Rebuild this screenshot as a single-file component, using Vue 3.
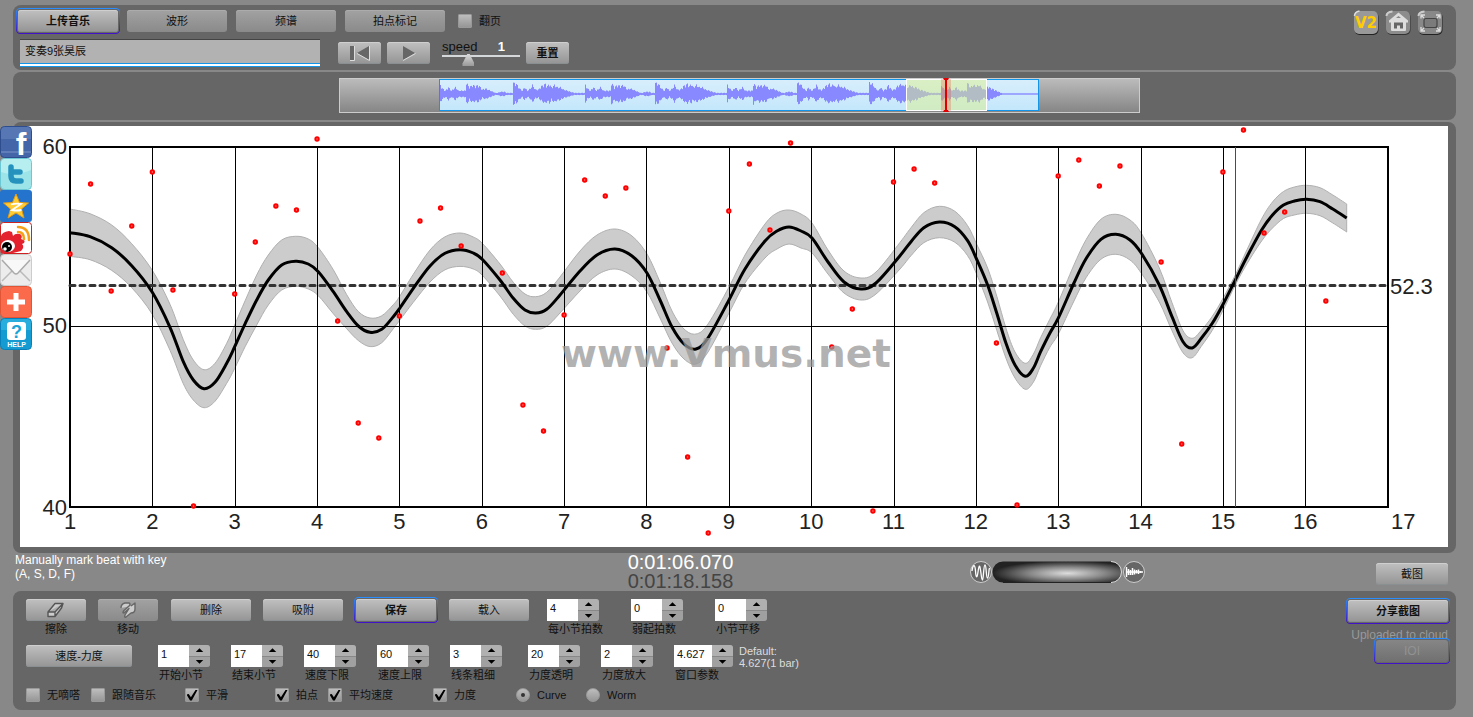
<script setup>
import { ref, reactive, computed } from 'vue'

const title = ref('变奏9张昊辰')
const flip = ref(false)
const speed = ref(1)
const mode = ref('curve')

const barFields = reactive([
  { id: 'beats', label: '每小节拍数', value: '4' },
  { id: 'pickup', label: '弱起拍数', value: '0' },
  { id: 'shift', label: '小节平移', value: '0' },
])
const rangeFields = reactive([
  { id: 'first', label: '开始小节', value: '1' },
  { id: 'last', label: '结束小节', value: '17' },
  { id: 'low', label: '速度下限', value: '40' },
  { id: 'high', label: '速度上限', value: '60' },
  { id: 'stroke', label: '线条粗细', value: '3' },
])
const dynamicsFields = reactive([
  { id: 'alpha', label: '力度透明', value: '20' },
  { id: 'zoom', label: '力度放大', value: '2' },
  { id: 'window', label: '窗口参数', value: '4.627', wide: true },
])
const checks = reactive([
  { id: 'mute', label: '无嘀嗒', on: false },
  { id: 'follow', label: '跟随音乐', on: false },
  { id: 'smooth', label: '平滑', on: true },
  { id: 'points', label: '拍点', on: true },
  { id: 'mean', label: '平均速度', on: true },
  { id: 'force', label: '力度', on: true },
])
function step(field, by) {
  field.value = String(Number(field.value) + by)
}

/* ---- tempo chart ---- */
const barX = (bar) => 50 + (bar - 1) * 82.35
const bars = Array.from({ length: 16 }, (_, i) => i + 1)
const innerBars = bars.slice(1)
const beats = [
  [1, 128], [1.25, 58], [1.5, 165], [1.75, 100], [2, 46], [2.25, 164], [2.5, 380],
  [3, 168], [3.25, 116], [3.5, 80], [3.75, 84], [4, 13], [4.25, 195], [4.5, 297],
  [4.75, 312], [5, 190], [5.25, 95], [5.5, 82], [5.75, 120], [6.25, 147], [6.5, 279],
  [6.75, 305], [7, 189], [7.25, 54], [7.5, 70], [7.75, 62], [8.25, 222], [8.5, 331],
  [8.75, 407], [9, 85], [9.25, 38], [9.5, 104], [9.75, 17], [10.25, 221], [10.5, 183],
  [10.75, 385], [11, 56], [11.25, 43], [11.5, 57], [12.25, 217], [12.5, 379], [13, 50],
  [13.25, 34], [13.5, 60], [13.75, 40], [14.25, 136], [14.5, 318], [15, 46],
  [15.25, 4], [15.5, 107], [15.75, 86], [16.25, 175],
]
// x, y and half width of the dynamics band
const tempo = [
  [50, 106.7, 23.7], [70, 110.7, 23], [91.7, 121.7, 22.7], [111.7, 139.7, 22], [132.3, 166.3, 22],
  [150, 201.3, 23], [163.3, 235.7, 22], [173.3, 254, 20], [184, 262.7, 19], [195, 256.3, 19],
  [206.7, 237.3, 20], [214.7, 220.7, 21.7], [225.3, 197.3, 23], [236.7, 174, 25], [248.3, 154, 25],
  [261.7, 139, 25], [275.7, 135.3, 25], [288.3, 138, 25], [298.3, 145.7, 24], [313.3, 165.7, 22],
  [326.7, 185.7, 17], [338.3, 200, 14.5], [350, 206.3, 14.3], [361.7, 203.3, 13.5], [373.3, 190.7, 12],
  [379.7, 182.3, 12], [393.3, 162.3, 14], [410, 140, 16], [425, 127.3, 16.5], [440, 123.7, 16.7],
  [453.3, 127, 16], [462.7, 133.7, 16], [480, 154, 16], [493.3, 172.3, 16], [505, 184, 16],
  [515.7, 187, 16.3], [526.7, 183.3, 17], [540, 169, 18], [560, 145, 20], [577, 129, 20],
  [595, 123, 20], [612, 130, 20], [627, 147, 19], [640, 174, 18], [652, 201, 16], [664, 218, 15],
  [676, 223, 15], [688, 212, 14], [709, 174, 13], [725, 143, 14], [745, 115, 17], [757, 105, 18],
  [769, 101, 17], [781, 105, 17], [792, 112, 15], [808, 136, 12], [824, 156, 11], [841, 163, 11],
  [856, 157, 11], [880, 129.7, 13.3], [891, 115.7, 14], [903.8, 101.7, 15], [919.4, 96, 15.7],
  [934.8, 100.7, 15.5], [947.6, 114.7, 15], [956.7, 133.3, 15], [967.6, 159, 17], [976.8, 187.3, 17],
  [986, 217.3, 15], [995, 239, 13], [1005.2, 250.3, 13], [1013.3, 242.3, 14], [1020.6, 225.7, 14],
  [1029.8, 207.3, 14], [1038.5, 191.7, 16], [1053.5, 158, 18], [1066.3, 132.3, 19], [1080.9, 113.3, 20],
  [1095.8, 108.3, 20], [1110, 114, 20], [1121.4, 127.3, 20], [1139.3, 159, 17], [1152, 190.7, 14],
  [1163, 215.7, 11], [1172.2, 222, 9.7], [1181.3, 212.3, 8], [1192.3, 197.3, 7], [1203.2, 178, 6],
  [1215.3, 154, 5], [1227, 130.7, 7], [1241.6, 104, 11], [1252.5, 89, 13], [1263.5, 79, 13.5],
  [1274.4, 75, 14], [1286.5, 73.3, 14], [1300, 75.7, 14], [1312.8, 83, 14], [1326.7, 92, 14],
]
// Catmull-Rom spline through the points, as cubic Bézier segments
function spline(pts) {
  let d = ''
  for (let i = 0; i < pts.length - 1; i++) {
    const a = pts[i - 1] || pts[i]
    const b = pts[i]
    const c = pts[i + 1]
    const e = pts[i + 2] || c
    const n = [
      b[0] + (c[0] - a[0]) / 6, b[1] + (c[1] - a[1]) / 6,
      c[0] - (e[0] - b[0]) / 6, c[1] - (e[1] - b[1]) / 6, c[0], c[1],
    ].map((v) => v.toFixed(1))
    d += `C${n.join(' ')}`
  }
  return d
}
const curve = computed(() => `M${tempo[0][0]} ${tempo[0][1]}${spline(tempo)}`)
const band = computed(() => {
  const top = tempo.map(([x, y, h]) => [x, y - h])
  const bottom = tempo.map(([x, y, h]) => [x, y + h]).reverse()
  return `M${top[0].join(' ')}${spline(top)}L${bottom[0].join(' ')}${spline(bottom)}Z`
})

/* ---- audio overview ---- */
const phraseA = [[0, 10], [3, 9], [6, 5], [9, 3], [11, 6], [14, 3], [17, 5], [19, 8], [22, 4], [25, 4], [28, 7], [32, 9], [34, 7], [36, 9], [38, 6], [41, 8], [44, 6], [47, 6], [50, 4], [54, 3], [57, 2], [61, 1], [90, 1]]
const phraseB = [[0, 8], [2, 5], [5, 3], [8, 6], [11, 3], [15, 6], [18, 3], [25, 3], [26, 10], [29, 6], [32, 8], [35, 7], [38, 8], [42, 4], [45, 5], [50, 3], [55, 1], [57, 1], [60, 2], [64, 2], [66, 1], [90, 1]]
const phrases = [[101, phraseB], [174, phraseA], [246, phraseB], [316, phraseA], [388, phraseB], [458, phraseA], [530, phraseA], [602, phraseB]]
function loudness(x) {
  if (x > 662) return 0.5
  if (x > 646) return Math.max(1, (664 - x) / 2.4)
  const [start, shape] = phrases.filter((p) => p[0] <= x).pop()
  const at = x - start
  const k = shape.findIndex((p) => p[0] > at)
  const a = shape[k - 1]
  const b = shape[k]
  return a[1] + ((b[1] - a[1]) * (at - a[0])) / (b[0] - a[0])
}
const wave = computed(() => {
  let d = ''
  for (let x = 101; x < 699; x++) {
    const v = loudness(x)
    const up = Math.max(0.7, v * (0.8 + 0.4 * Math.abs(Math.sin(x * 7.3))))
    const down = Math.max(0.7, v * (0.75 + 0.35 * Math.abs(Math.sin(x * 4.1 + 1))))
    d += `M${x + 0.5} ${(16 - up).toFixed(1)}V${(16 + down).toFixed(1)}`
  }
  return d
})
</script>

<template>
  <div class="app">
    <header class="panel top">
      <div class="tools">
        <div class="row">
          <button class="btn w100 accent">上传音乐</button>
          <button class="btn w100 dim">波形</button>
          <button class="btn w100 dim">频谱</button>
          <button class="btn w100 dim">拍点标记</button>
          <label class="check flip"><input v-model="flip" type="checkbox" />翻页</label>
        </div>
        <div class="row transport">
          <input v-model="title" class="title" type="text" aria-label="Title" />
          <button class="btn w43" aria-label="Rewind">
            <svg width="22" height="16" viewBox="0 0 22 16">
              <path d="M1 1h4v14H1z" fill="#666" /><path d="M5.500 1v14.500H1" fill="none" stroke="#ddd" />
              <path d="M20 1v14L8 8z" fill="#666" /><path d="M20.500 1v14.500L8 8.500" fill="none" stroke="#ddd" />
            </svg>
          </button>
          <button class="btn w43" aria-label="Play">
            <svg width="16" height="16" viewBox="0 0 16 16">
              <path d="M2 1v14l12-7z" fill="#666" /><path d="M2 15.500l12.500-7" fill="none" stroke="#ddd" />
            </svg>
          </button>
          <div class="speed">
            <div class="speed-text"><label for="speed">speed</label><output for="speed">{{ speed }}</output></div>
            <input id="speed" v-model="speed" type="range" min="0.1" max="3" step="0.1" />
          </div>
          <button class="btn w43 strong">重置</button>
        </div>
      </div>
      <nav class="corner">
        <a href="#v2" aria-label="Version 2">
          <svg width="26" height="26" viewBox="0 0 26 26">
            <rect x="1.500" y="2" width="24" height="23" rx="5" fill="#222" /><rect x="1" y="1" width="24" height="23" rx="5" fill="#999" />
            <path d="M1.500 6q0-4 5-5" fill="none" stroke="#ddd" stroke-width="1.500" />
            <text x="13" y="18" class="v2">V2</text>
          </svg>
        </a>
        <a href="#home" aria-label="Home">
          <svg width="26" height="26" viewBox="0 0 26 26">
            <rect x="1.500" y="2" width="24" height="23" rx="5" fill="#333" /><rect x="1" y="1" width="24" height="23" rx="5" fill="#8c8c8c" />
            <path d="M1.500 6q0-4 6-4.500" fill="none" stroke="#ccc" stroke-width="2" />
            <path d="M13.500 2.500L4 10.500v2h2V20q0 1 1 1h13q1 0 1-1v-7.500h2v-2z" fill="#ddd" />
            <path d="M9 18.500v-6h9v6h-3v-3h-3v3z" fill="#666" /><path d="M11 8h5l-2.500-2z" fill="#888" />
          </svg>
        </a>
        <a href="#full" aria-label="Full screen">
          <svg width="26" height="26" viewBox="0 0 26 26">
            <rect x="1.500" y="2" width="24" height="23" rx="5" fill="#222" /><rect x="1" y="1" width="24" height="23" rx="5" fill="#888" />
            <path d="M1.500 6q0-4 6-4.500" fill="none" stroke="#ccc" stroke-width="2" />
            <rect x="7" y="8.500" width="13" height="9" rx="2" fill="#7b7b7b" stroke="#444" stroke-width="1.200" />
            <path d="M4 8.500V5h4M4 5l3 3M19 5h4v3.500M23 5l-3 3M4 17v4h4M4 21l3-3M19 21h4v-4M23 21l-3-3" fill="none" stroke="#ddd" stroke-width="1.300" />
          </svg>
        </a>
      </nav>
    </header>

    <section class="panel overview">
      <svg width="802" height="35" viewBox="0 0 802 35" role="img" aria-label="Audio overview">
        <defs>
          <linearGradient id="ends" x2="0" y2="1"><stop stop-color="#bcbcbc" /><stop offset="1" stop-color="#858585" /></linearGradient>
          <linearGradient id="sky" x2="0" y2="1"><stop stop-color="#d8eefc" /><stop offset="1" stop-color="#c4e7fb" /></linearGradient>
        </defs>
        <rect x="0.500" y="0.500" width="800" height="34" fill="url(#ends)" stroke="#ccc" />
        <rect x="100.500" y="1.500" width="599" height="31" fill="url(#sky)" stroke="#1395ea" />
        <path :d="wave" stroke="#8888ff" />
        <rect x="567.500" y="1.500" width="80" height="31" fill="#dcf08c" fill-opacity="0.500" stroke="#fff" />
        <rect x="602" y="1" width="10" height="32" fill="#f00" opacity="0.180" />
        <path d="M607 1v32" stroke="#e00000" stroke-width="2" />
        <path d="M604 0h6l-1 2h-4zM604 34h6l-1-2h-4z" fill="#e00000" />
      </svg>
    </section>

    <main class="panel stage">
      <svg class="chart" viewBox="0 0 1428 421" role="img" aria-label="Tempo curve">
        <rect width="1428" height="421" fill="#fff" />
        <path :d="band" fill="#ccc" stroke="#b0b0b0" stroke-width="1" />
        <path v-for="bar in innerBars" :key="bar" :d="`M${Math.round(barX(bar)) + 0.5} 20V381`" stroke="#000" />
        <path d="M50 200.500H1368" stroke="#000" />
        <rect x="50" y="21" width="1318" height="360" fill="none" stroke="#000" stroke-width="2" />
        <path d="M50 159.500H1367" stroke="#333" stroke-width="3" stroke-dasharray="5 5" stroke-linecap="round" />
        <path :d="curve" fill="none" stroke="#000" stroke-width="3" />
        <circle v-for="[bar, y] in beats" :key="bar" :cx="barX(bar)" :cy="y" r="1.700" fill="#f88" stroke="#f00" stroke-width="2" />
        <path d="M1215.500 21V381" stroke="#f00" stroke-width="1" />
        <text x="706" y="241" class="mark">www.Vmus.net</text>
        <g class="axis">
          <text x="47" y="28" class="end">60</text>
          <text x="47" y="207" class="end">50</text>
          <text x="47" y="389" class="end">40</text>
          <text v-for="bar in bars" :key="bar" :x="barX(bar)" y="403" class="mid">{{ bar }}</text>
          <text x="1371" y="403">17</text>
          <text x="1370" y="168">52.3</text>
        </g>
      </svg>
    </main>

    <section class="status">
      <p class="hint">Manually mark beat with key<br />(A, S, D, F)</p>
      <div class="clock"><div class="now">0:01:06.070</div><div class="total">0:01:18.158</div></div>
      <svg class="jog" width="178" height="24" viewBox="0 0 178 24" role="img" aria-label="Horizontal zoom">
        <defs>
          <radialGradient id="glow" cx="0.580" cy="0.560" r="0.580"><stop stop-color="#ddd" /><stop offset="0.500" stop-color="#888" /><stop offset="1" stop-color="#222" /></radialGradient>
        </defs>
        <circle cx="12" cy="12" r="10.500" fill="#666" stroke="#ccc" />
        <path d="M3 11C4 4 6 4 6.500 11S8 19 9 12 10.500 4 11.500 10 12.500 20 13.500 20 14.500 5 16 5 17 18 18.500 18 19.500 10 20.500 8" fill="none" stroke="#fff" stroke-width="1.300" />
        <path d="M34 1.500h108a10.500 10.500 0 0 1 0 21H34a10.500 10.500 0 0 1 0-21z" fill="url(#glow)" />
        <path d="M34 1.500h108" stroke="#555" stroke-dasharray="2 2" /><path d="M34 22.500h108" stroke="#222" />
        <path d="M142 1.500a10.500 10.500 0 0 1 0 21" fill="none" stroke="#ddd" />
        <circle cx="165" cy="12" r="10.500" fill="#666" stroke="#ccc" />
        <path d="M157 12h17M157.500 7v10M159.500 9v6M161.500 10v5M163.500 8v7M165.500 9.500v5M167.500 10v3.500M169.500 9.500v4.500M171.500 11v2" stroke="#fff" stroke-width="1.500" />
      </svg>
      <button class="btn w72">截图</button>
    </section>

    <footer class="panel bottom">
      <div class="controls">
        <div class="row gap12">
          <div class="tile">
            <button id="erase" class="btn w60" aria-label="擦除">
              <svg width="18" height="16" viewBox="0 0 18 16"><path d="M1 10L8 1.500h8L14.500 6L8 14.500H1zM1 10h7L16 1.500M8 10v4.500" fill="#ccc" stroke="#555" stroke-width="1.400" stroke-linejoin="round" /></svg>
            </button>
            <label for="erase">擦除</label>
          </div>
          <div class="tile">
            <button id="move" class="btn w60 dim" aria-label="移动">
              <svg width="18" height="18" viewBox="0 0 18 18"><path d="M2 7q0-4 4-5h4q2 1 0 3L5 9.500Q3 12 5 12L10 7.500L6 14q-1 3 1 2l5-4q4 0 4-4V2l-4 3" fill="#ccc" stroke="#666" stroke-width="1.400" stroke-linejoin="round" /></svg>
            </button>
            <label for="move">移动</label>
          </div>
          <button class="btn w80">删除</button>
          <button class="btn w80">吸附</button>
          <button class="btn w80 accent inset">保存</button>
          <button class="btn w80">载入</button>
          <div class="fields spread">
            <div v-for="f in barFields" :key="f.id" class="field">
              <div class="stepper">
                <input :id="f.id" v-model="f.value" type="text" />
                <div class="arrows"><button aria-label="+" @click="step(f, 1)"></button><button class="down" aria-label="-" @click="step(f, -1)"></button></div>
              </div>
              <label :for="f.id">{{ f.label }}</label>
            </div>
          </div>
        </div>
        <div class="row second">
          <button class="btn w106">速度-力度</button>
          <div class="fields">
            <div v-for="f in rangeFields" :key="f.id" class="field">
              <div class="stepper">
                <input :id="f.id" v-model="f.value" type="text" />
                <div class="arrows"><button aria-label="+" @click="step(f, 1)"></button><button class="down" aria-label="-" @click="step(f, -1)"></button></div>
              </div>
              <label :for="f.id">{{ f.label }}</label>
            </div>
          </div>
          <div class="fields">
            <div v-for="f in dynamicsFields" :key="f.id" class="field" :class="{ wide: f.wide }">
              <div class="stepper">
                <input :id="f.id" v-model="f.value" type="text" />
                <div class="arrows"><button aria-label="+" @click="step(f, 1)"></button><button class="down" aria-label="-" @click="step(f, -1)"></button></div>
              </div>
              <label :for="f.id">{{ f.label }}</label>
            </div>
          </div>
          <p class="default">Default:<br />4.627(1 bar)</p>
        </div>
        <div class="options">
          <label v-for="c in checks" :key="c.id" class="check"><input v-model="c.on" type="checkbox" />{{ c.label }}</label>
          <label class="check"><input v-model="mode" type="radio" value="curve" />Curve</label>
          <label class="check"><input v-model="mode" type="radio" value="worm" />Worm</label>
        </div>
      </div>
      <div class="share">
        <button class="btn w100 accent">分享截图</button>
        <span class="cloud">Uploaded to cloud</span>
        <button class="btn w72 accent off" disabled>IOI</button>
      </div>
    </footer>

    <nav class="social">
      <a href="#facebook" aria-label="Facebook">
        <svg viewBox="0 0 32 32"><rect x="0.500" y="0.500" width="31" height="31" rx="4" fill="#4565a9" stroke="#2e4d8c" /><path d="M1 5q0-4 4-4h22q4 0 4 4v8H1z" fill="#6482bd" opacity="0.600" /><path d="M1 26h30" stroke="#7c95c8" /><text x="21" y="29" class="fb">f</text></svg>
      </a>
      <a href="#twitter" aria-label="Twitter">
        <svg viewBox="0 0 32 32"><rect x="0.500" y="0.500" width="31" height="31" rx="4" fill="#9ce4e8" stroke="#6cc8d4" /><path d="M1 5q0-4 4-4h22q4 0 4 4v7q-16 7-30 2z" fill="#c3f3f3" opacity="0.700" /><path d="M11 9v9q0 5 5 5h5M11 14h9" fill="none" stroke="#2592bd" stroke-width="5.500" stroke-linecap="round" stroke-linejoin="round" /></svg>
      </a>
      <a href="#qzone" aria-label="Qzone">
        <svg viewBox="0 0 32 32"><rect width="32" height="32" rx="3" fill="#2474ce" /><path d="M16 4l3.500 8.500 9 .5-7 6 2.500 9-8-5-8 5 2.500-9-7-6 9-.5z" fill="#fc3" stroke="#e69a10" /><path d="M11 14.500q5-1.500 10-.5l-9 6q5 1 9.500 0" fill="none" stroke="#fff" stroke-width="1.800" /></svg>
      </a>
      <a href="#weibo" aria-label="Weibo">
        <svg viewBox="0 0 32 32"><rect x="0.500" y="0.500" width="31" height="31" rx="3" fill="#fff" stroke="#c22" /><path d="M1 14q1-4 8-5l3 1 1 4q2-3 7-2 3 2 1 5 5 1 3 4l-2 1q3 3-1 7l-8 2H1z" fill="#e3222d" /><ellipse cx="8" cy="24" rx="7" ry="6" fill="#fff" /><circle cx="7" cy="25" r="5" fill="#000" /><circle cx="5" cy="27" r="1.800" fill="#fff" /><circle cx="9" cy="24" r="1" fill="#fff" /><path d="M18 5q11 0 11 13M18 10q6 0 6 7" fill="none" stroke="#f6a01a" stroke-width="2.500" stroke-linecap="round" /></svg>
      </a>
      <a href="#mail" aria-label="Mail">
        <svg viewBox="0 0 32 32"><rect x="0.500" y="0.500" width="31" height="31" rx="4" fill="#ececec" stroke="#ccc" /><path d="M2 27l10-10M30 27L20 17" stroke="#bbb" stroke-width="1.500" /><path d="M2 6l12 13q2 2 4 0L30 6" fill="#f8f8f8" stroke="#aaa" stroke-width="1.500" /></svg>
      </a>
      <a href="#more" aria-label="More">
        <svg viewBox="0 0 32 32"><rect x="0.500" y="0.500" width="31" height="31" rx="4" fill="#fb6b4b" stroke="#e05535" /><path d="M16 7v18M7 16h18" stroke="#fff" stroke-width="5" /></svg>
      </a>
      <a href="#help" aria-label="Help">
        <svg viewBox="0 0 32 32"><rect x="0.500" y="0.500" width="31" height="31" rx="4" fill="#139bd2" stroke="#0b80b8" /><path d="M1 5q0-4 4-4h22q4 0 4 4v7H1z" fill="#3fc0e6" opacity="0.500" /><rect x="7" y="4" width="19" height="18" rx="3" fill="#fff" /><text x="16.500" y="20" class="ask">?</text><text x="16.500" y="29" class="help">HELP</text></svg>
      </a>
    </nav>
  </div>
</template>

<style>
body { background: #888; }
</style>

<style scoped>
.app {
  position: relative;
  box-sizing: border-box;
  min-width: 1200px;
  padding: 5px 17px 7px 13px;
  font: 11px/14px "Liberation Sans", "Noto Sans CJK SC", sans-serif;
  color: #111;
}
p { margin: 0; }
button, input { font: inherit; color: inherit; margin: 0; padding: 0; box-sizing: border-box; }
.panel { background: #666; border-radius: 8px; box-sizing: border-box; }
.row { display: flex; align-items: flex-start; }
.top { display: flex; justify-content: space-between; height: 65px; padding: 5px 13px 0 5px; margin-bottom: 2px; }
.tools .row { gap: 9px; }
.tools .transport { gap: 6px; margin: 7px 0 0 2px; align-items: center; height: 28px; }
.btn {
  display: flex; align-items: center; justify-content: center;
  height: 22px; flex: none; border: 0; border-radius: 3px;
  background: linear-gradient(#c0c0c0, #949494);
  box-shadow: inset 0 1px #cfcfcf, inset 0 -1px #8a8f92;
}
.btn.dim { background: linear-gradient(#a2a2a2, #8a8a8a); box-shadow: inset 0 1px #acacac; }
.btn.accent, .btn.strong { font-weight: bold; }
.btn.accent { position: relative; }
.btn.accent::before {
  content: ""; position: absolute; inset: -2px; border-radius: 4px; padding: 1px;
  background: linear-gradient(#2a90ff, #4010c8);
  mask: linear-gradient(#000 0 0) content-box exclude, linear-gradient(#000 0 0);
}
.btn.inset { margin: 0 1px; }
.btn.off { background: linear-gradient(#868686, #707070); box-shadow: none; color: #929292; font-size: 12px; font-weight: normal; }
.w43 { width: 43px; } .w60 { width: 60px; } .w72 { width: 72px; } .w80 { width: 80px; } .w100 { width: 100px; } .w106 { width: 106px; }
.title {
  width: 300px; height: 28px; padding: 0 5px 6px; margin-right: 12px;
  border: 0; border-top: 1px solid #444; border-bottom: 1px solid #1395ea;
  background: linear-gradient(#b2b2b2, #b2b2b2) 0 0 / 100% 23px no-repeat, linear-gradient(#1395ea, #1395ea) 0 23px / 100% 1px no-repeat, #fff;
}
.check { display: flex; align-items: center; gap: 7px; white-space: nowrap; }
.flip { margin-left: 4px; height: 22px; }
.check input {
  appearance: none; flex: none; width: 14px; height: 14px;
  background: linear-gradient(#bdbdbd, #969696); border: 1px solid #999; border-radius: 1px;
  display: grid; place-content: center;
}
.check input[type="radio"] { border-radius: 50%; }
.check input[type="checkbox"]:checked::before {
  content: ""; width: 11px; height: 11px; background: #000;
  clip-path: polygon(0 45%, 20% 40%, 40% 70%, 85% 0, 100% 5%, 48% 100%, 32% 100%);
}
.check input[type="radio"]:checked::before { content: ""; width: 4px; height: 4px; border-radius: 50%; background: #333; }
.speed { width: 78px; margin: 0 0 0 6px; }
.speed-text { display: flex; justify-content: space-between; padding-right: 15px; font-size: 13px; line-height: 14px; }
.speed output { color: #fff; font-weight: bold; }
.speed input { display: block; appearance: none; width: 78px; height: 12px; background: linear-gradient(#d4d8da, #d4d8da) 0 1px / 100% 2px no-repeat; }
.speed input::-webkit-slider-thumb { appearance: none; width: 12px; height: 12px; background: linear-gradient(#ddd, #999); clip-path: polygon(40% 0, 60% 0, 100% 80%, 100% 100%, 0 100%, 0 80%); }
.corner { display: flex; gap: 6px; }
.corner svg { display: block; }
.v2 { font: bold 15px "DejaVu Sans", sans-serif; fill: #fc0; text-anchor: middle; }
.overview { display: flex; justify-content: center; padding: 6px 0 7px 10px; margin-bottom: 2px; }
.stage { padding: 4px 8px 6px 7px; }
.chart { display: block; width: 100%; height: auto; overflow: hidden; }
.axis { font: 22px "Liberation Sans", sans-serif; fill: #222; }
.end { text-anchor: end; }
.mid { text-anchor: middle; }
.mark { font: bold 39px "DejaVu Sans", sans-serif; fill: #999; fill-opacity: 0.75; text-anchor: middle; }
.status { display: grid; grid-template-columns: 614fr 342fr 408fr 72px; height: 38px; padding: 0 8px 0 2px; }
.hint { color: #fff; font-size: 12px; }
.clock { font-size: 20px; line-height: 19px; color: #444; }
.now { color: #fff; }
.jog { margin-top: 7px; }
.status .btn { margin-top: 10px; }
.bottom { display: flex; justify-content: space-between; padding: 8px 8px 8px 13px; height: 119px; }
.gap12 { gap: 12px; height: 46px; }
.tile { display: flex; flex-direction: column; align-items: center; gap: 1px; }
.tile + .btn { margin-left: 1px; }
.field { width: 52px; white-space: nowrap; }
.field.wide { width: 59px; }
.field label { display: block; margin-top: 1px; padding-left: 1px; }
.fields { display: flex; gap: 21px; }
.spread { gap: 32px; margin-left: 6px; }
.stepper { display: flex; height: 22px; }
.stepper input { flex: 1; min-width: 0; border: 0; background: #fff; padding: 0 0 5px 3px; }
.arrows { width: 21px; display: grid; grid-template-rows: 1fr 1fr; gap: 1px; background: #888; border-radius: 0 3px 3px 0; overflow: hidden; }
.arrows button { border: 0; background: #b0b0b0; display: grid; place-content: center; }
.arrows button::before { content: ""; width: 8px; height: 4px; background: #000; clip-path: polygon(50% 0, 100% 100%, 0 100%); }
.arrows .down { background: #a0a0a0; }
.arrows .down::before { clip-path: polygon(0 0, 100% 0, 50% 100%); }
.second { height: 42px; }
.second .fields { margin-left: 26px; }
.default { margin-left: 6px; color: #ddd; font-size: 11px; line-height: 12px; }
.options { display: grid; grid-template-columns: 65px 94px 90px 53px 105px 83px 70px auto; height: 16px; }
.share { display: flex; flex-direction: column; align-items: flex-end; padding-top: 1px; }
.cloud { font-size: 12px; line-height: 12px; color: #999; margin: 7px 0 -1px; }
.social { position: absolute; left: 0; top: 126px; width: 32px; }
.social a, .social svg { display: block; width: 32px; height: 32px; }
.fb { font: bold 32px/1 "Liberation Sans", sans-serif; fill: #fff; text-anchor: middle; }
.ask { font: bold 18px "Liberation Sans", sans-serif; fill: #1ba4d6; text-anchor: middle; }
.help { font: bold 7px "Liberation Sans", sans-serif; fill: #fff; text-anchor: middle; }
</style>
